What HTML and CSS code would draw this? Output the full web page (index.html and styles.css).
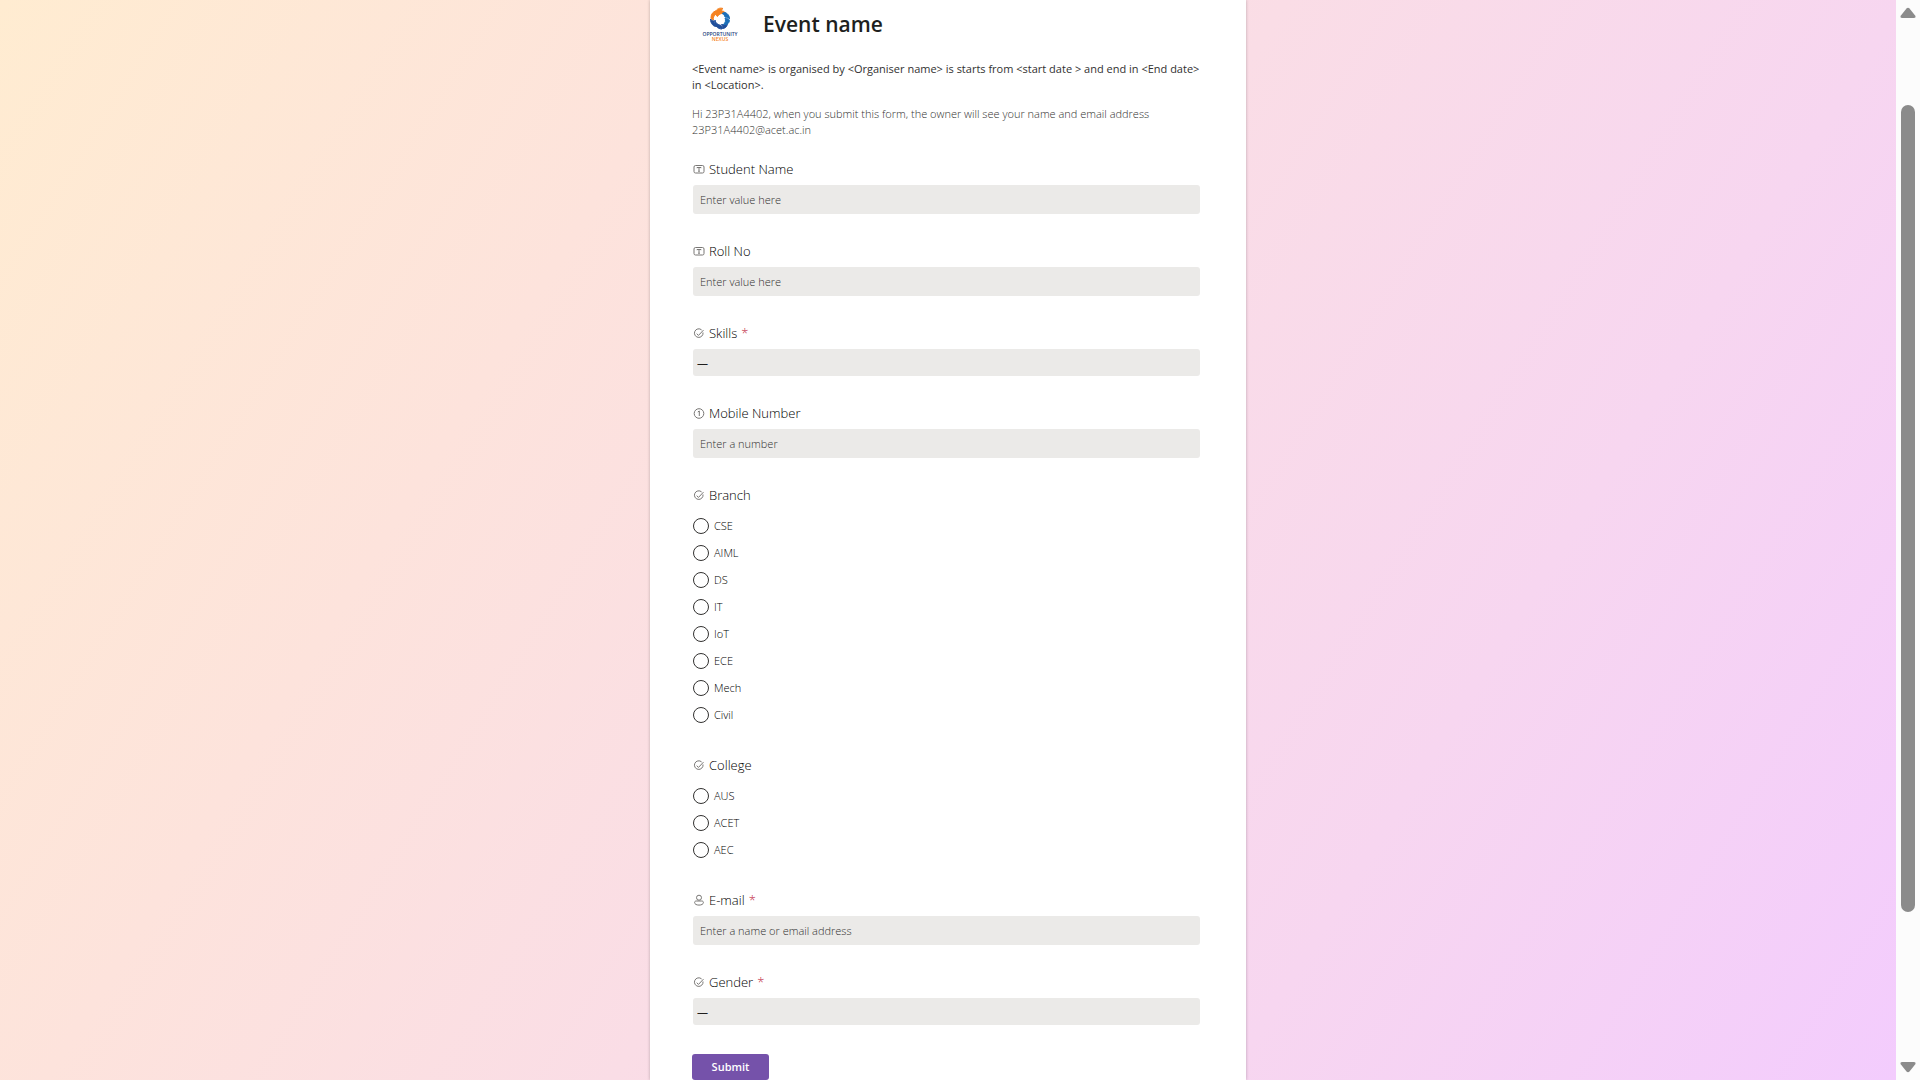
FILE: index.html
```html
<!DOCTYPE html>
<html lang="en">
<head>
<meta charset="utf-8">
<title>Event name</title>
<link rel="stylesheet" href="styles.css">
</head>
<body>
<svg class="sprite" aria-hidden="true">
  <symbol id="i-text" viewBox="0 0 12 12"><rect x="1" y="2.5" width="10" height="7.5" rx="1.5"/><path d="M4 5.2V4.500h4v.7M6 4.500v3.800M5.200 8.300h1.600"/></symbol>
  <symbol id="i-choice" viewBox="0 0 12 12"><path d="M8.600 2.900A4.300 4.300 0 1 0 10 5.500"/><path d="M3.700 6.700l1.800 1.700 5-5.300"/></symbol>
  <symbol id="i-number" viewBox="0 0 12 12"><circle cx="6" cy="6.500" r="4.800"/><path d="M4.800 5l1.500-1v5"/></symbol>
  <symbol id="i-person" viewBox="0 0 12 12"><circle cx="6" cy="3.700" r="2.500"/><path d="M3.200 7h5.600c1 0 1.600.6 1.600 1.400 0 1.800-1.900 2.700-4.400 2.700S1.600 10.200 1.600 8.400C1.600 7.600 2.200 7 3.200 7z"/></symbol>
</svg>
<div class="page">
  <main class="backdrop">
    <form class="card">
      <header class="head">
        <svg class="logo" viewBox="0 0 58 40" role="img" aria-label="Opportunity Nexus">
          <g fill="#f58220" stroke="#f58220">
            <path d="M19 14c0-4 2-6.500 5-7-1 1.500-1 2.500-.5 3.500-2 1.500-2.500 3.500-2 5.500-1.500 0-2.200-1-2.500-2z"/>
            <path d="M23 8c2-3.500 5-4.500 8-3.500-1 .5-1.500 1.500-1.500 2.500 2.500 0 3.500 1 4 2.500-3.500-.5-6 0-8 3-1.500-1-2.500-2.500-2.500-4.500z"/>
          </g>
          <g fill="#1f4e9b" stroke="#1f4e9b">
            <path d="M18.500 15c1 1.500 2 2 3.500 2 0 2 1 4 3 5.500-3.500.5-6.500-3-6.500-7.500z"/>
            <path d="M23 16c0 3 3 4.500 6 5.500 1 .5 1.500 2 1 3.500-4.500 0-8-3.500-7-9z"/>
            <path d="M29.500 20.500c2.500.5 4.500 0 6-1.500 0 3.500-2.500 5.500-5 5.500.5-1.500 0-3-1-4z"/>
          </g>
          <g fill="#1c6fb8" stroke="#1c6fb8">
            <path d="M33 8.500c3 1 4.500 3.500 4.500 6.500-1.500-1.500-3-2-4.500-2-.5-1.500-1-3-3-3.500 1-.5 2-1 3-1z"/>
            <path d="M33 14c2 0 3.500 1 4.500 2.500-.5 3-2.500 4.500-6 4 2-2 2.500-4 1.500-6.500z"/>
          </g>
          <text class="logo-name" x="28" y="32" text-anchor="middle">OPPORTUNITY</text>
          <text class="logo-name logo-accent" x="28" y="37" text-anchor="middle">NEXUS</text>
        </svg>
        <h1>Event name</h1>
      </header>
      <p class="about">&lt;Event name&gt; is organised by &lt;Organiser name&gt; is starts from &lt;start date &gt; and end in &lt;End date&gt;<br>in &lt;Location&gt;.</p>
      <p class="notice">Hi 23P31A4402, when you submit this form, the owner will see your name and email address<br>23P31A4402@acet.ac.in</p>

      <div class="fields">
        <div class="field">
          <label class="label" for="student"><svg class="icon"><use href="#i-text"/></svg>Student Name</label>
          <input class="control" id="student" type="text" placeholder="Enter value here">
        </div>
        <div class="field">
          <label class="label" for="roll"><svg class="icon"><use href="#i-text"/></svg>Roll No</label>
          <input class="control" id="roll" type="text" placeholder="Enter value here">
        </div>
        <div class="field">
          <label class="label" for="skills"><svg class="icon"><use href="#i-choice"/></svg>Skills <span class="required">*</span></label>
          <select class="control pick" id="skills"><option>—</option></select>
        </div>
        <div class="field">
          <label class="label" for="mobile"><svg class="icon"><use href="#i-number"/></svg>Mobile Number</label>
          <input class="control" id="mobile" type="text" inputmode="numeric" placeholder="Enter a number">
        </div>
        <fieldset class="field">
          <legend class="label"><svg class="icon"><use href="#i-choice"/></svg>Branch</legend>
          <div class="options">
            <label class="option"><input type="radio" name="branch">CSE</label>
            <label class="option"><input type="radio" name="branch">AIML</label>
            <label class="option"><input type="radio" name="branch">DS</label>
            <label class="option"><input type="radio" name="branch">IT</label>
            <label class="option"><input type="radio" name="branch">IoT</label>
            <label class="option"><input type="radio" name="branch">ECE</label>
            <label class="option"><input type="radio" name="branch">Mech</label>
            <label class="option"><input type="radio" name="branch">Civil</label>
          </div>
        </fieldset>
        <fieldset class="field">
          <legend class="label"><svg class="icon"><use href="#i-choice"/></svg>College</legend>
          <div class="options">
            <label class="option"><input type="radio" name="college">AUS</label>
            <label class="option"><input type="radio" name="college">ACET</label>
            <label class="option"><input type="radio" name="college">AEC</label>
          </div>
        </fieldset>
        <div class="field">
          <label class="label" for="email"><svg class="icon"><use href="#i-person"/></svg>E-mail <span class="required">*</span></label>
          <input class="control" id="email" type="text" placeholder="Enter a name or email address">
        </div>
        <div class="field">
          <label class="label" for="gender"><svg class="icon"><use href="#i-choice"/></svg>Gender <span class="required">*</span></label>
          <select class="control pick" id="gender"><option>—</option></select>
        </div>
      </div>
      <button class="submit" type="submit">Submit</button>
    </form>
  </main>
  <div class="scrollbar" aria-hidden="true">
    <svg class="arrow" viewBox="0 0 16 12"><path d="M6.500 1.500Q8 0 9.500 1.500L15.500 9Q16 11 14 11H2Q0 11 .5 9z"/></svg>
    <div class="track"><div class="thumb"></div></div>
    <svg class="arrow" viewBox="0 0 16 12"><path d="M6.500 10.500Q8 12 9.500 10.500L15.500 3Q16 1 14 1H2Q0 1 .5 3z"/></svg>
  </div>
</div>
</body>
</html>
```
FILE: styles.css
```css
* { box-sizing: border-box; }

body {
  margin: 0;
  font-family: "Open Sans", "Noto Sans", sans-serif;
  font-size: 11px;
  font-weight: 300;
  line-height: 16px;
  color: #000;
}

.sprite { display: none; }

.page {
  display: flex;
  height: 100vh;
  overflow: hidden;
}

.backdrop {
  flex: 1;
  display: flex;
  justify-content: center;
  background: linear-gradient(122deg, #ffecd1 0%, #fde3dc 28%, #fadde6 50%, #f7d6f0 74%, #f3ccfd 100%);
}

.card {
  width: 100%;
  max-width: 596px;
  min-height: 100vh;
  padding: 4px 46px 0 42px;
  background: #fff;
  box-shadow: 0 0 3px rgba(0, 0, 0, 0.25);
}

.head {
  display: flex;
  align-items: center;
  gap: 13px;
  height: 40px;
}

.logo { width: 58px; height: 40px; stroke-width: 0; }

.logo path { stroke-width: 1; }

.logo-name {
  font-size: 5px;
  font-weight: 600;
  fill: #1f3f7d;
}

.logo-accent { fill: #f58220; }

h1 {
  margin: 0;
  font-size: 21px;
  line-height: 32px;
  font-weight: 600;
  color: #201f1e;
}

.about {
  margin: 17px 0 0;
  font-weight: 400;
  white-space: nowrap;
  color: #323130;
}

.notice { margin: 13px 0 0; color: #323130; }

.fields {
  display: flex;
  flex-direction: column;
  gap: 27px;
  margin: 21px 0 0 1px;
}

.field {
  min-width: 0;
  margin: 0;
  padding: 0;
  border: 0;
}

.label {
  display: flex;
  align-items: center;
  gap: 4px;
  height: 20px;
  padding: 0;
  font-size: 13px;
  line-height: 20px;
}

.icon {
  width: 12px;
  height: 12px;
  fill: none;
  stroke: #797775;
  stroke-width: 1;
}

.required { color: #c4314b; }

.control {
  display: block;
  width: 100%;
  height: 29px;
  margin: 6px 0 0;
  padding: 0 7px;
  border: 0;
  border-radius: 3px;
  background: #ebeae8;
  font: inherit;
  color: #201f1e;
}

.control::placeholder { color: #323130; opacity: 1; }

.pick {
  appearance: none;
  height: 27px;
  padding: 0 4px;
  font-weight: 400;
}

.options {
  display: grid;
  gap: 11px;
  padding: 13px 0 5px;
}

.option {
  display: flex;
  align-items: center;
  gap: 5px;
  height: 16px;
}

.option input {
  appearance: none;
  width: 16px;
  height: 16px;
  margin: 0;
  border: 1px solid #323130;
  border-radius: 50%;
}

.submit {
  display: block;
  width: 77px;
  height: 26px;
  margin-top: 29px;
  padding: 0;
  border: 0;
  border-radius: 3px;
  background: #7552aa;
  color: #fff;
  font: inherit;
  font-weight: 600;
}

.scrollbar {
  display: flex;
  flex-direction: column;
  align-items: center;
  width: 24px;
  padding: 7px 0;
  background: #fcfcfc;
}

.arrow { width: 16px; height: 12px; fill: #8b8b8b; }

.track { flex: 1; padding: 86px 0 149px; }

.thumb {
  width: 14px;
  height: 100%;
  border-radius: 7px;
  background: #8b8b8b;
}
```
